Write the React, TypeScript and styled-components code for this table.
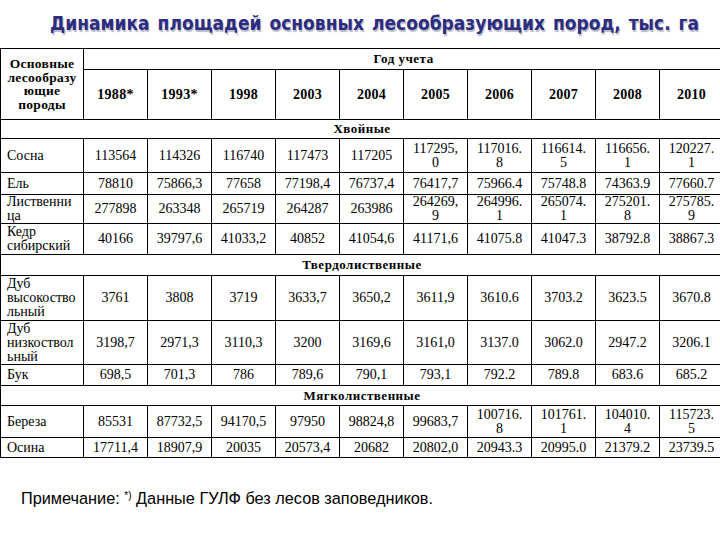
import * as React from "react";
import styled, { createGlobalStyle } from "styled-components";

const GlobalStyles = createGlobalStyle`
  html, body {
    margin: 0;
    padding: 0;
    background: #ffffff;
  }
`;

const years = ["1988*", "1993*", "1998", "2003", "2004", "2005", "2006", "2007", "2008", "2010"];

// "|" marks a forced line break, as in the narrow cells of the original table
const groups = [
  {
    title: "Хвойные",
    height: 19,
    rows: [
      {
        name: "Сосна",
        height: 34,
        values: ["113564", "114326", "116740", "117473", "117205", "117295,|0", "117016.|8", "116614.|5", "116656.|1", "120227.|1"],
      },
      {
        name: "Ель",
        height: 22,
        values: ["78810", "75866,3", "77658", "77198,4", "76737,4", "76417,7", "75966.4", "75748.8", "74363.9", "77660.7"],
      },
      {
        name: "Лиственни|ца",
        height: 29,
        values: ["277898", "263348", "265719", "264287", "263986", "264269,|9", "264996.|1", "265074.|1", "275201.|8", "275785.|9"],
      },
      {
        name: "Кедр|сибирский",
        height: 31,
        values: ["40166", "39797,6", "41033,2", "40852", "41054,6", "41171,6", "41075.8", "41047.3", "38792.8", "38867.3"],
      },
    ],
  },
  {
    title: "Твердолиственные",
    height: 21,
    rows: [
      {
        name: "Дуб|высокоство|льный",
        height: 45,
        values: ["3761", "3808", "3719", "3633,7", "3650,2", "3611,9", "3610.6", "3703.2", "3623.5", "3670.8"],
      },
      {
        name: "Дуб|низкоствол|ьный",
        height: 44,
        values: ["3198,7", "2971,3", "3110,3", "3200", "3169,6", "3161,0", "3137.0", "3062.0", "2947.2", "3206.1"],
      },
      {
        name: "Бук",
        height: 21,
        values: ["698,5", "701,3", "786", "789,6", "790,1", "793,1", "792.2", "789.8", "683.6", "685.2"],
      },
    ],
  },
  {
    title: "Мягколиственные",
    height: 20,
    rows: [
      {
        name: "Береза",
        height: 32,
        values: ["85531", "87732,5", "94170,5", "97950", "98824,8", "99683,7", "100716.|8", "101761.|1", "104010.|4", "115723.|5"],
      },
      {
        name: "Осина",
        height: 20,
        values: ["17711,4", "18907,9", "20035", "20573,4", "20682", "20802,0", "20943.3", "20995.0", "21379.2", "23739.5"],
      },
    ],
  },
];

const Lines = ({ text }: { text: string }) => (
  <>
    {text.split("|").map((line, i) => (
      <React.Fragment key={i}>
        {i > 0 && <br />}
        {line}
      </React.Fragment>
    ))}
  </>
);

export default function App() {
  return (
    <Page>
      <GlobalStyles />
      <Title>Динамика площадей основных лесообразующих пород, тыс. га</Title>
      <TableClip>
        <Table>
          <colgroup>
            <col style={{ width: 83 }} />
            {years.map((y) => (
              <col key={y} style={{ width: 64 }} />
            ))}
          </colgroup>
          <thead>
            <tr style={{ height: 21 }}>
              <HeadCell rowSpan={2}>
                <Lines text="Основные|лесообразу|ющие|породы" />
              </HeadCell>
              <SpanHead colSpan={10}>Год учета</SpanHead>
            </tr>
            <tr style={{ height: 50 }}>
              {years.map((y) => (
                <YearCell key={y}>{y}</YearCell>
              ))}
            </tr>
          </thead>
          <tbody>
            {groups.map((g) => (
              <React.Fragment key={g.title}>
                <tr style={{ height: g.height }}>
                  <GroupCell colSpan={11}>{g.title}</GroupCell>
                </tr>
                {g.rows.map((r) => (
                  <tr key={r.name} style={{ height: r.height }}>
                    <NameCell>
                      <Lines text={r.name} />
                    </NameCell>
                    {r.values.map((v, i) => (
                      <ValueCell key={i}>
                        <Lines text={v} />
                      </ValueCell>
                    ))}
                  </tr>
                ))}
              </React.Fragment>
            ))}
          </tbody>
        </Table>
      </TableClip>
      <Note>
        Примечание: <Sup>*)</Sup> Данные ГУЛФ без лесов заповедников.
      </Note>
    </Page>
  );
}

const Page = styled.div`
  width: 720px;
  height: 540px;
  overflow: hidden;
  background: #ffffff;
`;

const Title = styled.h1`
  margin: 0;
  height: 48px;
  display: flex;
  align-items: center;
  padding: 0 0 2px 50px;
  box-sizing: border-box;
  font-family: "DejaVu Sans Condensed", "DejaVu Sans", sans-serif;
  font-stretch: condensed;
  font-size: 19px;
  font-weight: bold;
  word-spacing: 2px;
  color: #2c2c80;
  text-shadow: 1px 2px 1px #b8b8c8;
  white-space: nowrap;
`;

const TableClip = styled.div`
  width: 720px;
  overflow: hidden;
`;

const Table = styled.table`
  border-collapse: collapse;
  table-layout: fixed;
  width: 723px;
  font-family: "Liberation Serif", "Times New Roman", serif;
  font-size: 14px;
  line-height: 14px;
  color: #000;

  td,
  th {
    border: 1px solid #000;
    padding: 0 2px;
    vertical-align: middle;
    overflow: hidden;
  }
`;

const HeadCell = styled.th`
  font-size: 13.5px;
  font-weight: bold;
  line-height: 13.5px;
  text-align: center;
  letter-spacing: 0.3px;
`;

const SpanHead = styled.th`
  font-size: 13px;
  font-weight: bold;
  text-align: center;
  letter-spacing: 0.5px;
`;

const YearCell = styled.th`
  font-size: 14px;
  font-weight: bold;
  text-align: center;
  letter-spacing: 0.3px;
`;

const GroupCell = styled.td`
  font-size: 13px;
  font-weight: bold;
  text-align: center;
  letter-spacing: 0.5px;
`;

const NameCell = styled.td`
  && {
    padding-left: 6px;
  }
  text-align: left;
`;

const ValueCell = styled.td`
  text-align: center;
`;

const Note = styled.p`
  margin: 31px 0 0 21px;
  font-family: "Liberation Sans", Arial, sans-serif;
  font-size: 16.3px;
  color: #000;
`;

const Sup = styled.sup`
  font-size: 10px;
  vertical-align: 5px;
  line-height: 0;
`;
